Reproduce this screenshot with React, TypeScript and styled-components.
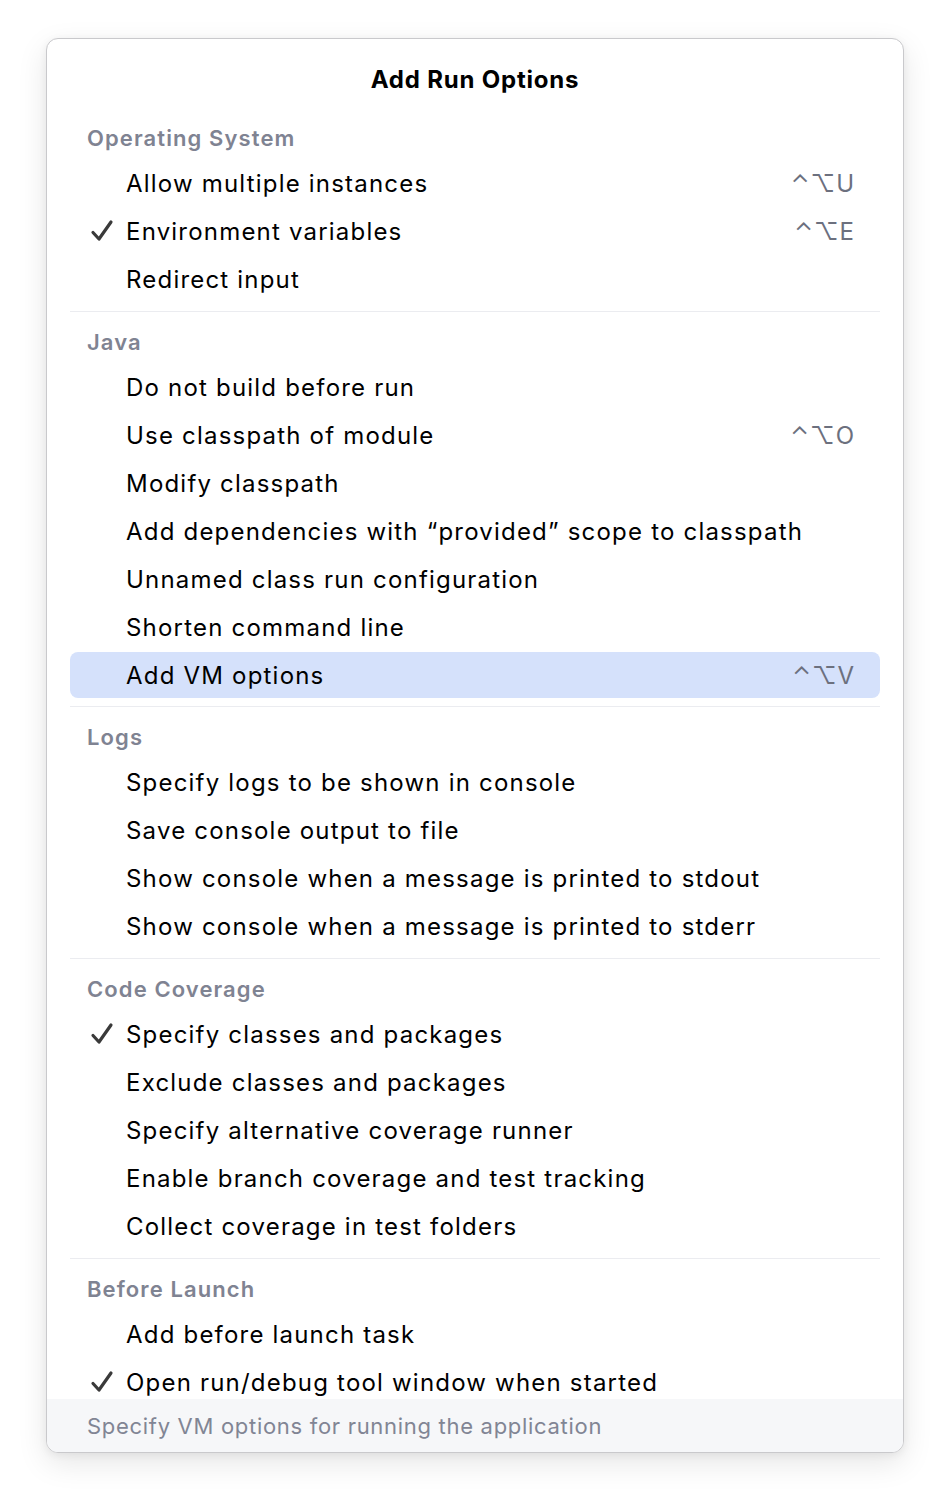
import React from "react";
import styled, { createGlobalStyle } from "styled-components";

const Global = createGlobalStyle`
  html, body { margin: 0; padding: 0; background: #ffffff; }
  body { font-family: Inter, "Noto Sans", "DejaVu Sans", sans-serif; -webkit-font-smoothing: antialiased; }
`;

const Page = styled.div`
  width: 950px;
  height: 1508px;
  padding: 38px 0 0 46px;
  box-sizing: border-box;
`;

const Dialog = styled.div`
  width: 858px;
  height: 1415px;
  box-sizing: border-box;
  background: #ffffff;
  border-radius: 12px;
  border: 1px solid #c9c9cc;
  box-shadow: 0 10px 30px rgba(0, 0, 0, 0.1), 0 2px 8px rgba(0, 0, 0, 0.06);
  display: flex;
  flex-direction: column;
  overflow: hidden;
`;

const Title = styled.div`
  height: 77px;
  flex: none;
  display: flex;
  align-items: center;
  justify-content: center;
  padding-top: 3px;
  box-sizing: border-box;
  font-size: 24px;
  font-weight: 700;
  letter-spacing: 0.8px;
  color: #000;
`;

const List = styled.div`
  flex: 1;
  overflow: hidden;
  padding: 0 23px;
`;

const Header = styled.div`
  height: 43px;
  display: flex;
  align-items: center;
  padding-left: 17px;
  font-size: 22px;
  font-weight: 600;
  letter-spacing: 1.1px;
  color: #7f8392;
`;

const Row = styled.div<{ $selected?: boolean }>`
  height: ${(p) => (p.$selected ? 46 : 48)}px;
  margin: ${(p) => (p.$selected ? "1px 0" : "0")};
  display: flex;
  align-items: center;
  border-radius: 8px;
  background: ${(p) => (p.$selected ? "#d5e1fb" : "transparent")};
  padding-right: 25px;
  font-size: 24px;
  color: #000;
  letter-spacing: 1.2px;
`;

const CheckCell = styled.div`
  width: 56px;
  flex: none;
  display: flex;
  align-items: center;
  padding-left: 20px;
  box-sizing: border-box;
`;

const Label = styled.div`
  flex: 1;
  white-space: nowrap;
`;

const Shortcut = styled.div`
  color: #6c707e;
  font-size: 24px;
  white-space: nowrap;
  letter-spacing: 1px;
`;

const Divider = styled.div`
  height: 1px;
  background: #ebecf0;
  margin: 8px 0;
`;

const Footer = styled.div`
  height: 53px;
  flex: none;
  background: #f6f7f9;
  display: flex;
  align-items: center;
  padding-left: 40px;
  font-size: 22px;
  letter-spacing: 0.7px;
  color: #818594;
`;

const Check = () => (
  <svg width="24" height="24" viewBox="0 0 24 24">
    <path d="M3 13.5 L9 20 L21 3" fill="none" stroke="#3a3a3a" strokeWidth="3.2" strokeLinecap="round" strokeLinejoin="round" />
  </svg>
);

type Item = { label: string; checked?: boolean; shortcut?: string; selected?: boolean };
type Section = { title: string; items: Item[] };

const sections: Section[] = [
  {
    title: "Operating System",
    items: [
      { label: "Allow multiple instances", shortcut: "⌃⌥U" },
      { label: "Environment variables", checked: true, shortcut: "⌃⌥E" },
      { label: "Redirect input" },
    ],
  },
  {
    title: "Java",
    items: [
      { label: "Do not build before run" },
      { label: "Use classpath of module", shortcut: "⌃⌥O" },
      { label: "Modify classpath" },
      { label: "Add dependencies with “provided” scope to classpath" },
      { label: "Unnamed class run configuration" },
      { label: "Shorten command line" },
      { label: "Add VM options", shortcut: "⌃⌥V", selected: true },
    ],
  },
  {
    title: "Logs",
    items: [
      { label: "Specify logs to be shown in console" },
      { label: "Save console output to file" },
      { label: "Show console when a message is printed to stdout" },
      { label: "Show console when a message is printed to stderr" },
    ],
  },
  {
    title: "Code Coverage",
    items: [
      { label: "Specify classes and packages", checked: true },
      { label: "Exclude classes and packages" },
      { label: "Specify alternative coverage runner" },
      { label: "Enable branch coverage and test tracking" },
      { label: "Collect coverage in test folders" },
    ],
  },
  {
    title: "Before Launch",
    items: [
      { label: "Add before launch task" },
      { label: "Open run/debug tool window when started", checked: true },
    ],
  },
];

export default function App() {
  return (
    <Page>
      <Global />
      <Dialog>
        <Title>Add Run Options</Title>
        <List>
          {sections.map((s, i) => (
            <React.Fragment key={s.title}>
              {i > 0 && <Divider />}
              <Header>{s.title}</Header>
              {s.items.map((it) => (
                <Row key={it.label} $selected={it.selected}>
                  <CheckCell>{it.checked && <Check />}</CheckCell>
                  <Label>{it.label}</Label>
                  {it.shortcut && <Shortcut>{it.shortcut}</Shortcut>}
                </Row>
              ))}
            </React.Fragment>
          ))}
        </List>
        <Footer>Specify VM options for running the application</Footer>
      </Dialog>
    </Page>
  );
}
